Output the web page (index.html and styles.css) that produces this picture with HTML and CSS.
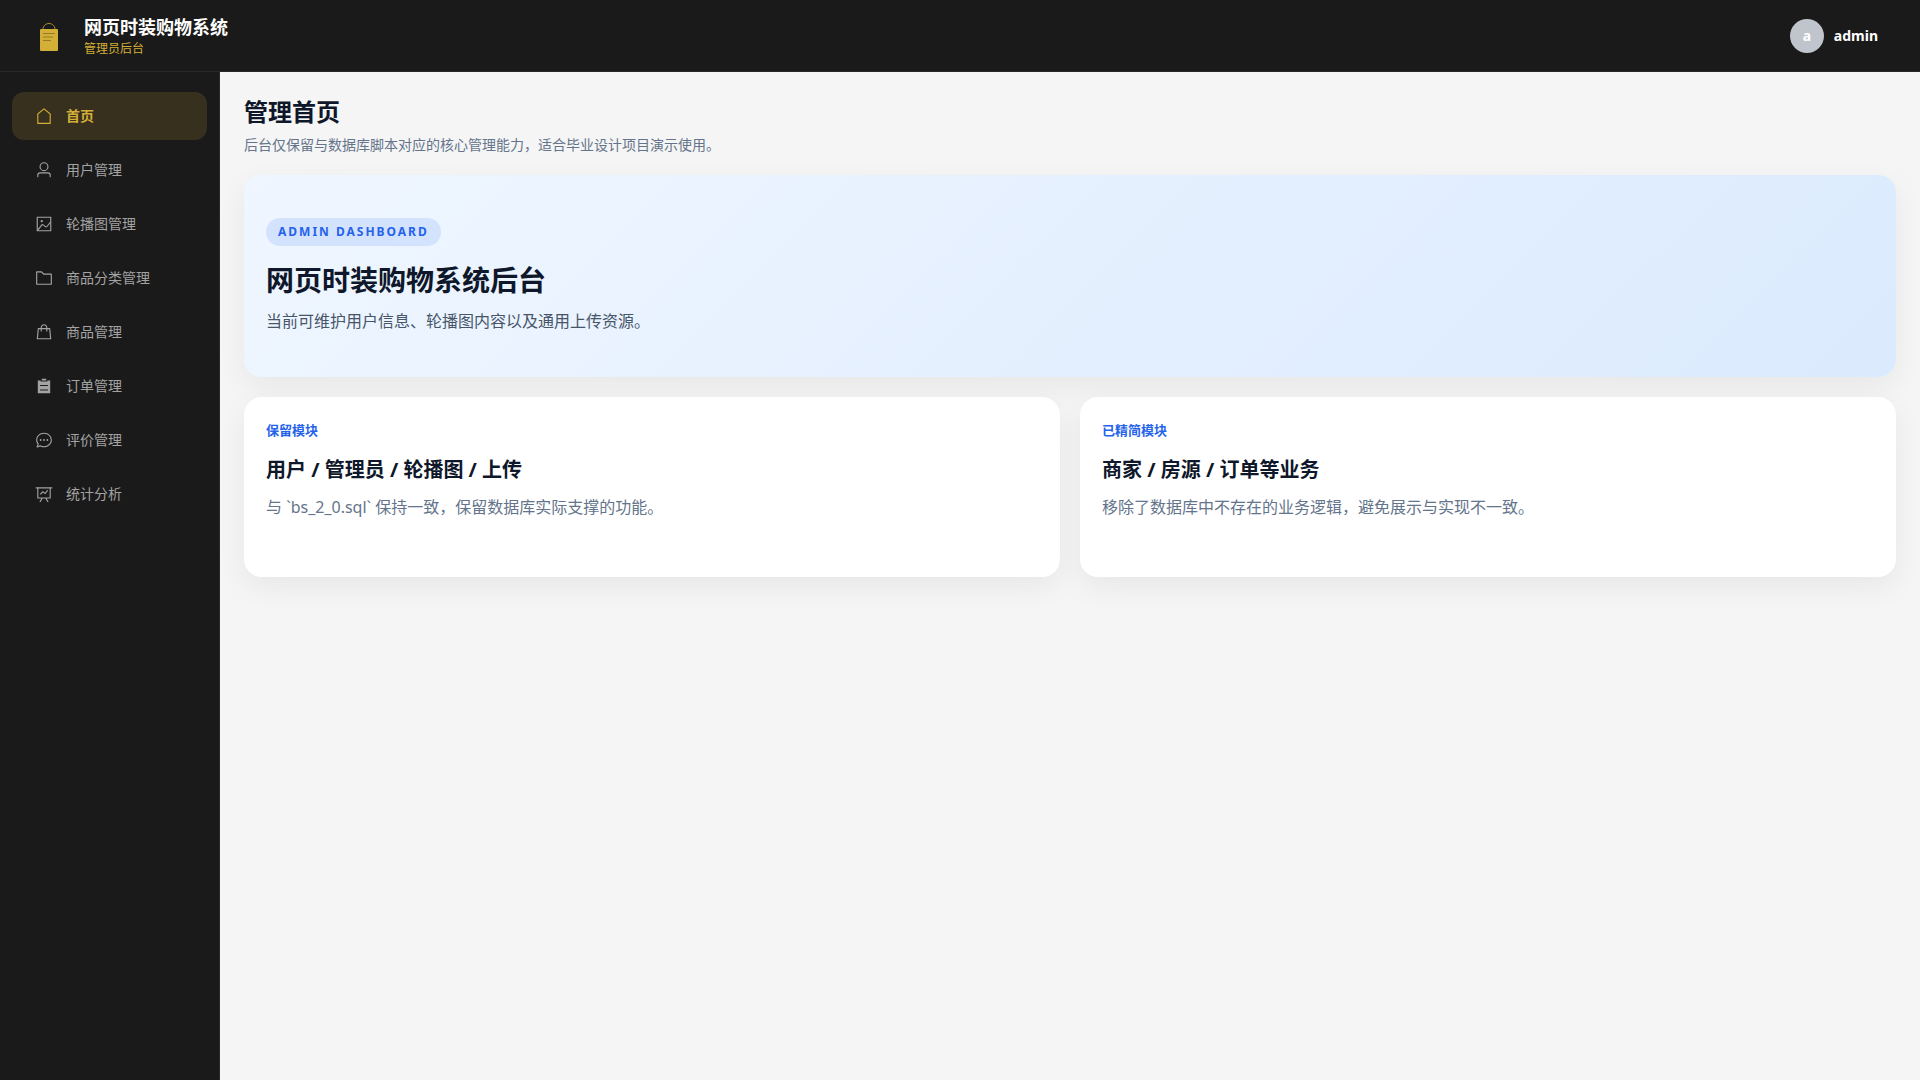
FILE: index.html
```html
<!DOCTYPE html>
<html lang="zh-CN">
<head>
<meta charset="UTF-8">
<meta name="viewport" content="width=device-width, initial-scale=1.0">
<title>网页时装购物系统</title>
<link rel="stylesheet" href="styles.css">
</head>
<body>

<header class="header">
    <div class="brand">
        <svg class="logo" viewBox="0 0 32 32" aria-hidden="true">
            <path d="M9 9.5C9 5.500 12 3.500 15 3.500s6 2 6 6" fill="none" stroke="#a68c30"/>
            <rect x="6" y="9" width="18" height="22" rx="1" fill="#d4af37"/>
            <path d="M9 13.500h12M9 17h10M9 20.500h8" stroke="#967c2a"/>
        </svg>
        <div>
            <div class="brand-title">网页时装购物系统</div>
            <div class="brand-subtitle">管理员后台</div>
        </div>
    </div>
    <div class="user">
        <span class="avatar">a</span>
        <span class="user-name">admin</span>
    </div>
</header>

<div class="layout">
    <nav class="sidebar">
        <a class="menu-item active" href="#">
            <svg viewBox="0 0 1024 1024"><path d="M192 413.952V896h640V413.952L512 147.328zM139.520 374.400l352-293.312a32 32 0 0 1 40.960 0l352 293.312A32 32 0 0 1 896 398.976V928a32 32 0 0 1-32 32H160a32 32 0 0 1-32-32V398.976a32 32 0 0 1 11.520-24.576"/></svg>
            <span>首页</span>
        </a>
        <a class="menu-item" href="#">
            <svg viewBox="0 0 1024 1024"><path d="M512 512a192 192 0 1 0 0-384 192 192 0 0 0 0 384m0 64a256 256 0 1 1 0-512 256 256 0 0 1 0 512m320 320v-96a96 96 0 0 0-96-96H288a96 96 0 0 0-96 96v96a32 32 0 1 1-64 0v-96a160 160 0 0 1 160-160h448a160 160 0 0 1 160 160v96a32 32 0 1 1-64 0"/></svg>
            <span>用户管理</span>
        </a>
        <a class="menu-item" href="#">
            <svg viewBox="0 0 1024 1024"><path d="M96 96h832v832H96zM160 160v704h704V160z" fill-rule="evenodd"/><path d="M384 288q64 0 64 64t-64 64q-64 0-64-64t64-64M185.408 876.992l-50.816-38.912L350.720 556.032a96 96 0 0 1 134.592-17.856l1.856 1.472 122.880 99.136a32 32 0 0 0 44.992-4.864l216-269.888 49.920 39.936-215.808 269.824-.256.320a96 96 0 0 1-135.040 14.464l-122.880-99.072-.640-.512a32 32 0 0 0-44.800 5.952z"/></svg>
            <span>轮播图管理</span>
        </a>
        <a class="menu-item" href="#">
            <svg viewBox="0 0 1024 1024"><path d="M128 192v640h768V320H485.760L357.504 192zm-32-64h287.872l128.384 128H928a32 32 0 0 1 32 32v576a32 32 0 0 1-32 32H96a32 32 0 0 1-32-32V160a32 32 0 0 1 32-32" fill-rule="evenodd"/></svg>
            <span>商品分类管理</span>
        </a>
        <a class="menu-item" href="#">
            <svg viewBox="0 0 1024 1024"><path d="M320 288v-22.336C320 154.688 405.504 64 512 64s192 90.688 192 201.664v22.400h131.072a32 32 0 0 1 31.808 28.800l57.600 576a32 32 0 0 1-31.808 35.200H131.328a32 32 0 0 1-31.808-35.200l57.600-576a32 32 0 0 1 31.808-28.800H320zm64 0h256v-22.336C640 189.248 582.272 128 512 128c-70.272 0-128 61.248-128 137.664zm-64 64H217.920l-51.200 512h690.560l-51.264-512H704v96a32 32 0 1 1-64 0v-96H384v96a32 32 0 0 1-64 0z"/></svg>
            <span>商品管理</span>
        </a>
        <a class="menu-item" href="#">
            <svg viewBox="0 0 1024 1024"><path d="M704 192h160v736H160V192h160v64h384zM288 512h448v-64H288zm0 256h448v-64H288zm96-576V96h256v96z" fill-rule="evenodd"/></svg>
            <span>订单管理</span>
        </a>
        <a class="menu-item" href="#">
            <svg viewBox="0 0 1024 1024"><path d="m174.720 855.680 135.296-45.120 23.680 11.840C388.096 849.536 448.576 864 512 864c211.840 0 384-166.784 384-352S723.840 160 512 160 128 326.784 128 512c0 69.120 24.960 139.264 70.848 199.232l22.080 28.800-46.272 115.584zm-45.248 82.560A32 32 0 0 1 89.600 896l58.368-145.920C94.720 680.320 64 596.864 64 512 64 299.904 256 96 512 96s448 203.904 448 416-192 416-448 416a461.056 461.056 0 0 1-206.912-48.384l-175.616 58.560z"/><circle cx="320" cy="512" r="51"/><circle cx="512" cy="512" r="51"/><circle cx="704" cy="512" r="51"/></svg>
            <span>评价管理</span>
        </a>
        <a class="menu-item" href="#">
            <svg viewBox="0 0 1024 1024"><path d="M359.168 768H160a32 32 0 0 1-32-32V192H64a32 32 0 0 1 0-64h896a32 32 0 1 1 0 64h-64v544a32 32 0 0 1-32 32H665.216l110.848 192h-73.856L591.360 768H433.024L322.176 960H248.320zM832 192H192v512h640zM342.656 534.656a32 32 0 1 1-45.312-45.312L444.992 341.760l125.440 94.080L679.040 300.032a32 32 0 1 1 49.920 39.936L581.632 524.224 451.008 426.240z" fill-rule="evenodd"/></svg>
            <span>统计分析</span>
        </a>
    </nav>

    <main class="main">
        <h1 class="page-title">管理首页</h1>
        <p class="page-desc">后台仅保留与数据库脚本对应的核心管理能力，适合毕业设计项目演示使用。</p>

        <section class="hero">
            <span class="badge">ADMIN DASHBOARD</span>
            <h2 class="hero-title">网页时装购物系统后台</h2>
            <p class="hero-desc">当前可维护用户信息、轮播图内容以及通用上传资源。</p>
        </section>

        <div class="cards">
            <section class="card">
                <div class="card-label">保留模块</div>
                <h3 class="card-title">用户 / 管理员 / 轮播图 / 上传</h3>
                <p class="card-desc">与 `bs_2_0.sql` 保持一致，保留数据库实际支撑的功能。</p>
            </section>
            <section class="card">
                <div class="card-label">已精简模块</div>
                <h3 class="card-title">商家 / 房源 / 订单等业务</h3>
                <p class="card-desc">移除了数据库中不存在的业务逻辑，避免展示与实现不一致。</p>
            </section>
        </div>
    </main>
</div>

</body>
</html>
```
FILE: styles.css
```css
* {
    box-sizing: border-box;
    margin: 0;
    padding: 0;
}
body {
    display: flex;
    flex-direction: column;
    min-height: 100vh;
    font-family: "Noto Sans", "Noto Sans CJK SC", sans-serif;
    background: #f5f5f5;
}

/* 顶部栏 */
.header {
    display: flex;
    justify-content: space-between;
    align-items: center;
    height: 72px;
    padding: 0 42px 0 34px;
    background: #1a1a1a;
    border-bottom: 1px solid #2a2a2a;
}
.brand {
    display: flex;
    align-items: center;
    gap: 18px;
}
.logo {
    width: 32px;
    height: 32px;
}
.brand-title {
    padding-top: 3px;
    font-size: 18px;
    font-weight: 700;
    line-height: 24px;
    color: #fff;
}
.brand-subtitle {
    font-size: 12px;
    line-height: 20px;
    color: #d4af37;
}
.user {
    display: flex;
    align-items: center;
    gap: 10px;
    color: #fff;
    font-size: 14px;
    font-weight: 700;
}
.avatar {
    width: 34px;
    height: 34px;
    border-radius: 50%;
    background: #c0c4cc;
    line-height: 34px;
    text-align: center;
}

.layout {
    display: flex;
    flex: 1;
}

/* 侧边菜单 */
.sidebar {
    display: flex;
    flex-direction: column;
    gap: 6px;
    width: 220px;
    padding: 20px 12px;
    background: #1a1a1a;
    border-right: 1px solid #2a2a2a;
}
.menu-item {
    display: flex;
    align-items: center;
    gap: 13px;
    height: 48px;
    padding: 0 23px;
    border-radius: 12px;
    color: #a3a3a3;
    font-size: 14px;
    text-decoration: none;
}
.menu-item svg {
    width: 18px;
    height: 18px;
    fill: currentColor;
}
.menu-item span {
    padding-bottom: 2px;
}
.menu-item.active {
    background: #37301f;
    color: #d4af37;
    font-weight: 600;
}

/* 内容区 */
.main {
    flex: 1;
    padding: 24px;
}
.page-title {
    font-size: 24px;
    line-height: 32px;
    color: #0f172a;
}
.page-desc {
    margin-top: 6px;
    font-size: 14px;
    line-height: 22px;
    color: #64748b;
}
.hero {
    display: flex;
    flex-direction: column;
    justify-content: center;
    align-items: flex-start;
    min-height: 202px;
    margin-top: 19px;
    padding: 22px 22px 24px;
    border-radius: 18px;
    background: linear-gradient(135deg, #eff6ff, #dbeafe);
    box-shadow: 0 10px 30px rgba(0, 0, 0, 0.06);
}
.badge {
    padding: 0 12px;
    border-radius: 14px;
    background: #d3e2fd;
    font-size: 12px;
    font-weight: 700;
    line-height: 28px;
    letter-spacing: 2px;
    color: #2563eb;
}
.hero-title {
    margin-top: 15px;
    font-size: 28px;
    line-height: 38px;
    color: #0f172a;
}
.hero-desc {
    margin-top: 10px;
    font-size: 16px;
    line-height: 24px;
    color: #475569;
}
.cards {
    display: grid;
    grid-template-columns: 1fr 1fr;
    gap: 20px;
    margin-top: 20px;
}
.card {
    min-height: 180px;
    padding: 22px;
    border-radius: 18px;
    background: #fff;
    box-shadow: 0 10px 30px rgba(0, 0, 0, 0.06);
}
.card-label {
    font-size: 13px;
    font-weight: 600;
    line-height: 22px;
    color: #2563eb;
}
.card-title {
    margin-top: 15px;
    font-size: 20px;
    line-height: 28px;
    color: #0f172a;
}
.card-desc {
    margin-top: 11px;
    font-size: 16px;
    line-height: 24px;
    color: #64748b;
}
```
